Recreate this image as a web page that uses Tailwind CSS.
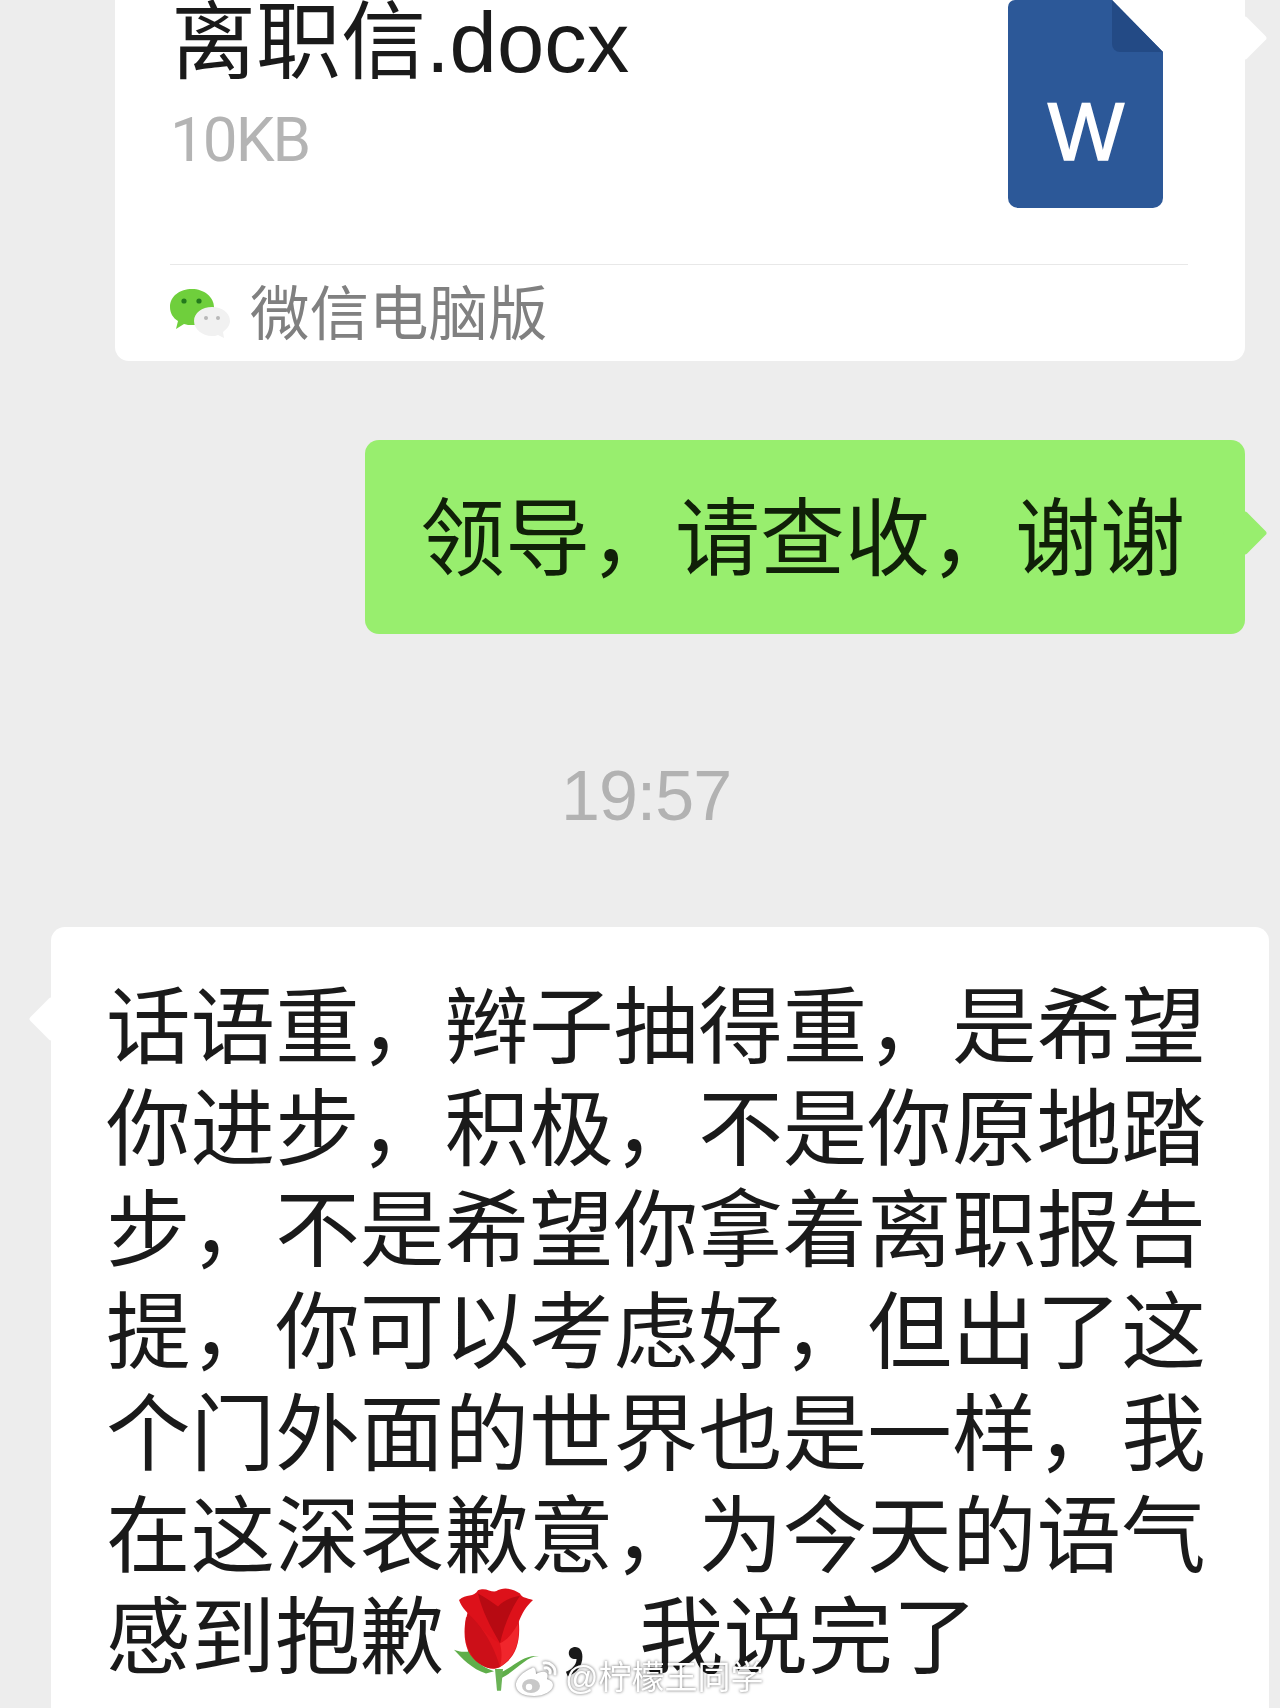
<!DOCTYPE html>
<html lang="zh-CN">

<head>
  <meta charset="UTF-8" />
  <meta name="viewport" content="width=device-width, initial-scale=1.0" />
  <title>微信聊天</title>
  <script src="https://cdn.jsdelivr.net/npm/@tailwindcss/browser@4"></script>
</head>

<body class="bg-[#ededed] text-[#1a1a1a] font-['Liberation_Sans','Noto_Sans_CJK_SC',sans-serif]">
  <div class="relative h-[1708px] overflow-hidden">

    <!-- File card -->
    <div class="relative ml-[115px] w-[1130px] h-[361px] bg-white rounded-b-[14px]">
      <div class="absolute right-[-16px] top-[22px] w-[32px] h-[32px] bg-white rotate-45 rounded-[3px]"></div>
      <div class="relative flex justify-between h-[264px] pl-[56px] pr-[82px]">
        <div>
          <p class="text-[85px] leading-[86px]">离职信.docx</p>
          <p class="mt-[21px] ml-[-1px] text-[62px] leading-[66px] text-[#b4b4b4] font-['Roboto'] tracking-[-2px]">10KB</p>
        </div>
        <svg class="w-[155px] h-[208px] shrink-0" viewBox="0 0 155 208">
          <path d="M7 0H104L155 52V198a10 10 0 0 1-10 10H10a10 10 0 0 1-10-10V7a7 7 0 0 1 7-7Z" fill="#2c5898" />
          <path d="M104 0L155 52H112a8 8 0 0 1-8-8Z" fill="#234a85" />
          <text x="78" y="160" text-anchor="middle" fill="#fff" stroke="#fff" stroke-width="1.5" font-family="Liberation Sans" font-size="81">W</text>
        </svg>
      </div>
      <div class="mx-[55px] w-[1018px] border-t border-[#e8e8e8]"></div>
      <div class="flex items-center gap-[20px] pl-[55px] h-[96px]">
        <svg class="w-[60px] h-[54px]" viewBox="0 0 60 54">
          <path d="M22 3c-12 0-22 7-22 18 0 6 3 11 8 14l-2 8 8-5c3 1 5 1 8 1 12 0 22-8 22-18S34 3 22 3Z" fill="#6fcf3c" />
          <circle cx="14" cy="15" r="2.6" fill="#237a1c" />
          <circle cx="29" cy="15" r="2.6" fill="#237a1c" />
          <path d="M42 21c-10 0-18 6-18 14s8 15 18 15c2 0 4 0 6-1l6 3-1-6c4-3 7-7 7-11 0-8-8-14-18-14Z" fill="#f1f1f1" />
          <circle cx="36" cy="32" r="2" fill="#b8b8b8" />
          <circle cx="48" cy="32" r="2" fill="#b8b8b8" />
        </svg>
        <p class="pt-[4px] text-[59.5px] leading-[70px] text-[#808080]">微信电脑版</p>
      </div>
    </div>

    <!-- Sent message -->
    <div class="relative ml-[365px] mt-[79px] w-[880px] h-[194px] bg-[#98ee6e] rounded-[14px] flex items-center pl-[55px] pt-[6px]">
      <div class="absolute right-[-16px] top-[77px] w-[32px] h-[32px] bg-[#98ee6e] rotate-45 rounded-[3px]"></div>
      <p class="relative text-[85px] leading-[100px] text-[#102008] whitespace-nowrap">领导，请查收，谢谢</p>
    </div>

    <!-- Time -->
    <p class="mt-[122px] ml-[561px] text-[70px] leading-[80px] text-[#b2b2b2] tracking-[-1px]">19:57</p>

    <!-- Received message -->
    <div class="relative ml-[51px] mt-[91px] w-[1218px] h-[900px] bg-white rounded-[14px] pl-[55px] pt-[50px]">
      <div class="absolute left-[-16px] top-[76px] w-[32px] h-[32px] bg-white rotate-45 rounded-[3px]"></div>
      <p class="relative text-[84.6px] leading-[101.7px] whitespace-nowrap">话语重，辫子抽得重，是希望<br />你进步，积极，不是你原地踏<br />步，不是希望你拿着离职报告<br />提，你可以考虑好，但出了这<br />个门外面的世界也是一样，我<br />在这深表歉意，为今天的语气<br />感到抱歉<svg class="inline-block align-middle my-[-24px] translate-y-[-4px] w-[110px] h-[108px]" viewBox="0 0 110 100" preserveAspectRatio="none">
          <!-- rose -->
          <path d="M22 42C20 56 30 72 50 78L42 80C28 76 18 66 10 58 16 60 20 60 24 60Z" fill="#5fae4a" />
          <path d="M54 80C68 76 78 62 95 64 82 64 72 78 58 84Z" fill="#5fae4a" />
          <path d="M51 76H59L57 96H53Z" fill="#6ab356" />
          <path d="M22 28C18 48 22 64 36 71 44 76 50 77 56 74 72 66 78 50 74 26Z" fill="#e0141c" />
          <path d="M24 22C34 34 48 48 56 74 44 78 30 72 24 56 20 46 20 36 24 22Z" fill="#cc0f18" />
          <path d="M15 12C22 6 30 10 34 3 42 0 46 5 52 4 60-1 70 2 76 6 78 10 82 10 89 12 82 18 78 24 74 34 68 44 62 50 56 52 44 46 36 36 30 30 24 24 18 20 15 12Z" fill="#dd111a" />
          <path d="M34 6C38 22 46 36 56 52 60 36 66 22 76 8 66 10 60 12 54 18 48 14 42 10 34 6Z" fill="#b70a12" />
          <path d="M56 52C62 50 68 44 74 34 76 50 72 64 56 74 58 66 58 60 56 52Z" fill="#f0262c" />
        </svg>，我说完了</p>
    </div>

    <!-- Watermark -->
    <div class="absolute left-[514px] top-[1656px] flex items-center gap-[5px] text-white [filter:drop-shadow(0_0_1.5px_rgba(0,0,0,.6))]">
      <svg class="w-[46px] h-[38px]" viewBox="0 0 46 38">
        <path d="M18 9C8 13 1 21 2 27c1 7 9 10 18 10 10 0 19-5 19-11 0-4-4-5-6-6 1-3 1-6-2-7-3-1-7 1-9 2 0-3-1-8-4-6Z" fill="#fff" />
        <ellipse cx="17" cy="27" rx="9" ry="7" fill="#c8c8c8" />
        <circle cx="15" cy="28" r="3.2" fill="#fff" />
        <path d="M30 4c6-1 12 4 11 11M31 9c3-1 6 2 5 5" fill="none" stroke-width="3" stroke="#fff" stroke-linecap="round" />
      </svg>
      <span class="text-[33px] leading-[44px] whitespace-nowrap">@柠檬王同学</span>
    </div>

  </div>
</body>

</html>
